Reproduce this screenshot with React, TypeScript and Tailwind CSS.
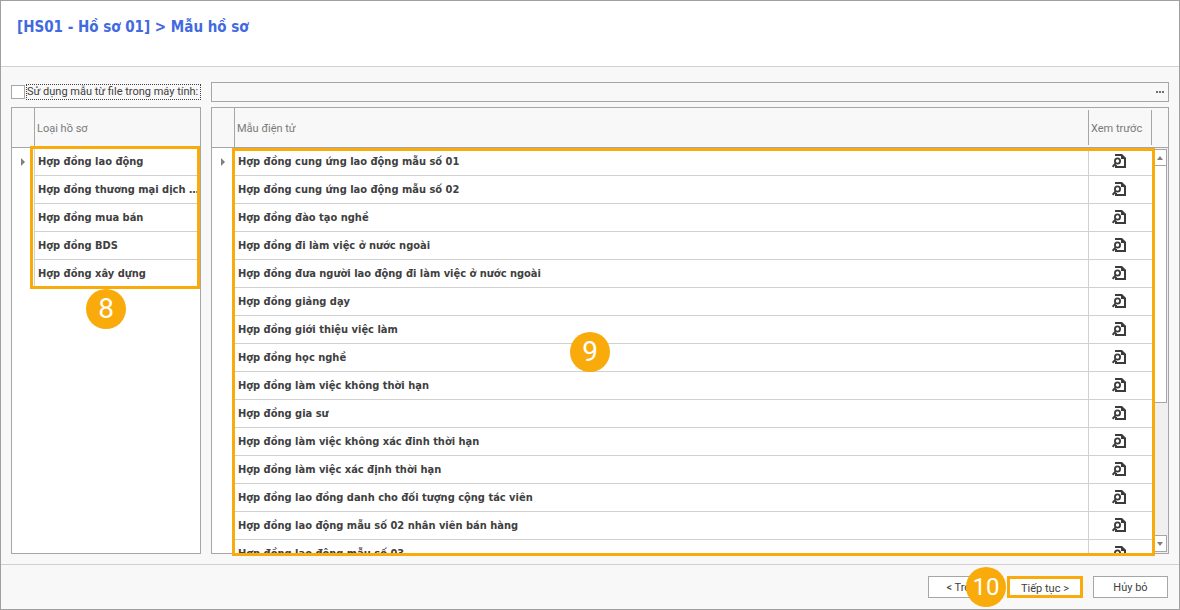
const categories = [
    'Hợp đồng lao động',
    'Hợp đồng thương mại dịch vụ',
    'Hợp đồng mua bán',
    'Hợp đồng BDS',
    'Hợp đồng xây dựng',
];

const templates = [
    'Hợp đồng cung ứng lao động mẫu số 01',
    'Hợp đồng cung ứng lao động mẫu số 02',
    'Hợp đồng đào tạo nghề',
    'Hợp đồng đi làm việc ở nước ngoài',
    'Hợp đồng đưa người lao động đi làm việc ở nước ngoài',
    'Hợp đồng giảng dạy',
    'Hợp đồng giới thiệu việc làm',
    'Hợp đồng học nghề',
    'Hợp đồng làm việc không thời hạn',
    'Hợp đồng gia sư',
    'Hợp đồng làm việc không xác đinh thời hạn',
    'Hợp đồng làm việc xác định thời hạn',
    'Hợp đồng lao đồng danh cho đối tượng cộng tác viên',
    'Hợp đồng lao động mẫu số 02 nhân viên bán hàng',
    'Hợp đồng lao động mẫu số 03',
];

const PreviewIcon = () => (
    <svg width="14" height="14" viewBox="0 0 14 14" fill="none" stroke="#3b3b3b" aria-hidden="true">
        <path d="M3 1h6l4 4v8H4v-2" strokeWidth="2" />
        <path d="M9 0v5h5V4l-4-4z" fill="#3b3b3b" stroke="none" />
        <circle cx="5.5" cy="7" r="2.6" strokeWidth="1.8" fill="#fff" />
        <path d="M3.8 9.2L0.6 12.8" strokeWidth="2" />
    </svg>
);

const RowMarker = () => (
    <svg width="4" height="8" viewBox="0 0 4 8" fill="#808080" className="ml-[9px]" aria-hidden="true">
        <path d="M0 0l4 4-4 4z" />
    </svg>
);

interface StepBadgeProps {
    step: number;
    className: string;
}

const StepBadge = ({ step, className }: StepBadgeProps) => (
    <span
        className={`absolute z-20 flex size-10 items-center justify-center rounded-full bg-[#f9ab0b] leading-none text-white ${className}`}
    >
        {step}
    </span>
);

const Highlight = ({ className }: { className: string }) => (
    <div className={`pointer-events-none absolute z-10 border-3 border-[#f9ab0b] ${className}`} />
);

const ScrollBar = () => (
    <div className="absolute top-10 right-0 bottom-0 flex w-4 flex-col bg-[#f0f0f0] pt-px pr-px pb-px" aria-hidden="true">
        <div className="flex h-[17px] items-center justify-center border border-[#a6a6a6] bg-white">
            <svg width="6" height="4" viewBox="0 0 6 4" fill="#808080">
                <path d="M0 4l3-4 3 4z" />
            </svg>
        </div>
        <div className="-mt-px h-[59%] border border-[#a6a6a6] bg-white" />
        <div className="mt-auto flex h-[17px] items-center justify-center border border-[#a6a6a6] bg-white">
            <svg width="6" height="4" viewBox="0 0 6 4" fill="#808080">
                <path d="M0 0l3 4 3-4z" />
            </svg>
        </div>
    </div>
);

const App = () => {
    return (
        <div className="flex h-screen flex-col border border-[#a0a0a0] bg-[#f8f8f8] font-[Roboto,'Noto_Sans',sans-serif] text-[11px] text-[#404040]">
            {/* Header */}
            <header className="h-[66px] shrink-0 border-b border-[#d0d0d0] bg-white px-4 pt-4">
                <h1 className="font-['DejaVu_Sans_Condensed','Noto_Sans',sans-serif] text-[15px] leading-5 font-bold text-[#4169e1]">
                    [HS01 - Hồ sơ 01] &gt; Mẫu hồ sơ
                </h1>
            </header>

            {/* Content */}
            <main className="flex min-h-0 flex-1 flex-col gap-[5px] px-[10px] pt-[15px] pb-[10px]">
                <div className="flex gap-[10px]">
                    <div className="flex w-[190px] shrink-0 items-center gap-px">
                        <input
                            id="use-file"
                            type="checkbox"
                            className="size-[14px] shrink-0 appearance-none border border-[#a6a6a6] bg-white checked:bg-[#4169e1]"
                        />
                        <label
                            htmlFor="use-file"
                            className="flex h-4 flex-1 items-center border border-dotted border-[#404040] whitespace-nowrap"
                        >
                            Sử dụng mẫu từ file trong máy tính:
                        </label>
                    </div>
                    <div className="flex h-5 flex-1 border border-[#a6a6a6]">
                        <input type="text" aria-label="File" className="min-w-0 flex-1 bg-transparent px-1 outline-none" />
                        <button type="button" aria-label="Browse" className="flex w-4 items-center justify-center gap-px">
                            <span className="size-[2px] bg-[#707070]" />
                            <span className="size-[2px] bg-[#707070]" />
                            <span className="size-[2px] bg-[#707070]" />
                        </button>
                    </div>
                </div>

                <div className="flex min-h-0 flex-1 gap-[10px]">
                    {/* Categories */}
                    <section className="w-[190px] shrink-0 border border-[#a6a6a6] bg-white">
                        <div className="relative">
                            <table className="w-full table-fixed border-separate border-spacing-0 text-left">
                                <thead>
                                    <tr className="h-10 bg-[#f8f8f8] text-[#7a7a7a]">
                                        <th className="w-[23px] border-r border-b border-[#a6a6a6]" />
                                        <th className="border-b border-[#a6a6a6] px-[2px] pt-[3px] font-normal">Loại hồ sơ</th>
                                    </tr>
                                </thead>
                                <tbody className="font-['DejaVu_Sans_Condensed','Noto_Sans',sans-serif]">
                                    {categories.map((name, i) => (
                                        <tr key={name} className="h-7">
                                            <td className="border-r border-[#d0d0d0]">{i === 0 && <RowMarker />}</td>
                                            <td className="truncate border-b border-[#d0d0d0] pt-px pl-[3px] font-bold">{name}</td>
                                        </tr>
                                    ))}
                                </tbody>
                            </table>
                            <Highlight className="top-[38px] right-0 -bottom-px left-[18px]" />
                            <StepBadge step={8} className="top-full left-[74px] mt-px text-[28px]" />
                        </div>
                    </section>

                    {/* Templates */}
                    <section className="relative min-w-0 flex-1 border border-[#a6a6a6] bg-white">
                        <div className="h-full overflow-hidden">
                            <table className="w-full table-fixed border-separate border-spacing-0 text-left">
                                <thead>
                                    <tr className="h-10 bg-[#f8f8f8] text-[#7a7a7a]">
                                        <th className="w-[23px] border-r border-b border-[#a6a6a6]" />
                                        <th className="border-b border-[#a6a6a6] px-[2px] pt-[3px] font-normal">Mẫu điện tử</th>
                                        <th className="w-16 border-b border-[#a6a6a6] py-[2px] font-normal">
                                            <div className="flex h-[35px] items-center border-x border-[#a6a6a6] pt-[3px] pl-[2px] whitespace-nowrap">
                                                Xem trước
                                            </div>
                                        </th>
                                        <th className="w-4 border-b border-[#a6a6a6]" />
                                    </tr>
                                </thead>
                                <tbody className="font-['DejaVu_Sans_Condensed','Noto_Sans',sans-serif]">
                                    {templates.map((name, i) => (
                                        <tr key={name} className="h-7">
                                            <td className="border-r border-[#d0d0d0]">{i === 0 && <RowMarker />}</td>
                                            <td className="truncate border-b border-[#d0d0d0] pt-px pl-[3px] font-bold">{name}</td>
                                            <td className="border-b border-l border-[#d0d0d0] pr-1 pb-[2px]">
                                                <button type="button" aria-label="Xem trước" className="mx-auto block">
                                                    <PreviewIcon />
                                                </button>
                                            </td>
                                            <td />
                                        </tr>
                                    ))}
                                </tbody>
                            </table>
                        </div>
                        <ScrollBar />
                        <Highlight className="top-10 right-[13px] -bottom-[3px] left-5" />
                        <StepBadge step={9} className="top-1/2 left-[358px] mt-px text-[28px]" />
                    </section>
                </div>
            </main>

            {/* Footer */}
            <footer className="flex h-[45px] shrink-0 items-center justify-end gap-[10px] border-t border-[#d0d0d0] px-[11px]">
                <div className="flex gap-1">
                    <button type="button" className="h-[22px] w-[75px] border border-[#a6a6a6] bg-white pt-[2px]">
                        &lt; Trở lại
                    </button>
                    <div className="relative h-[22px]">
                        <button type="button" className="h-full w-[76px] border-3 border-[#f9ab0b] bg-white pt-[2px] leading-none">
                            Tiếp tục &gt;
                        </button>
                        <StepBadge step={10} className="-top-[9px] right-full mr-px text-2xl" />
                    </div>
                </div>
                <button type="button" className="h-[22px] w-[75px] border border-[#a6a6a6] bg-white pt-[2px]">
                    Hủy bỏ
                </button>
            </footer>
        </div>
    );
};

export default App;
